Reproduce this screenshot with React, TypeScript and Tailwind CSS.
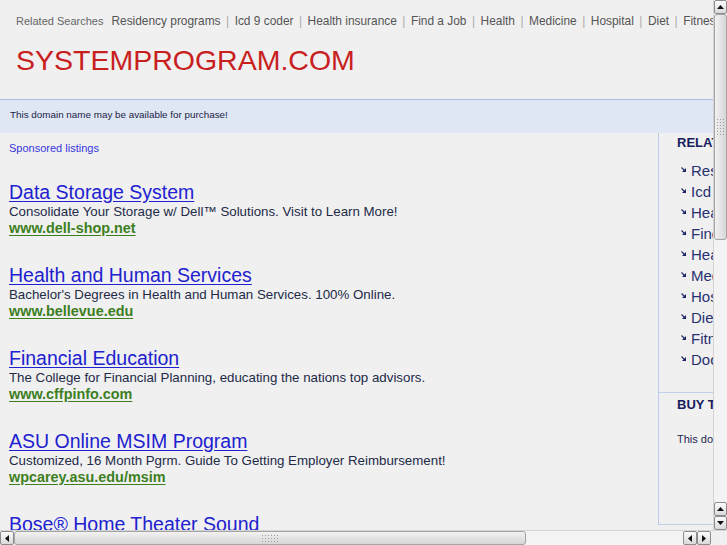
import React from "react";

const topLinks = [
  "Residency programs",
  "Icd 9 coder",
  "Health insurance",
  "Find a Job",
  "Health",
  "Medicine",
  "Hospital",
  "Diet",
  "Fitness",
  "Doctor",
];

const listings = [
  {
    t: "Data Storage System",
    d: "Consolidate Your Storage w/ Dell™ Solutions. Visit to Learn More!",
    u: "www.dell-shop.net",
  },
  {
    t: "Health and Human Services",
    d: "Bachelor's Degrees in Health and Human Services. 100% Online.",
    u: "www.bellevue.edu",
  },
  {
    t: "Financial Education",
    d: "The College for Financial Planning, educating the nations top advisors.",
    u: "www.cffpinfo.com",
  },
  {
    t: "ASU Online MSIM Program",
    d: "Customized, 16 Month Pgrm. Guide To Getting Employer Reimbursement!",
    u: "wpcarey.asu.edu/msim",
  },
  {
    t: "Bose® Home Theater Sound",
    d: "Experience Bose® home theater systems. Free shipping from Bose.",
    u: "www.bose.com",
  },
];

function Arrow({ dir }: { dir: "up" | "down" | "left" | "right" }) {
  const pts =
    dir === "up"
      ? "0,4 3.5,0 7,4"
      : dir === "down"
      ? "0,0 7,0 3.5,4"
      : dir === "left"
      ? "4,0 4,7 0,3.5"
      : "0,0 4,3.5 0,7";
  const w = dir === "up" || dir === "down" ? 7 : 4;
  const h = dir === "up" || dir === "down" ? 4 : 7;
  return (
    <svg width={w} height={h} viewBox={`0 0 ${w} ${h}`}>
      <polygon points={pts} fill="#111" />
    </svg>
  );
}

function SBtn({ dir, cls }: { dir: "up" | "down" | "left" | "right"; cls: string }) {
  return (
    <div
      className={`${cls} flex items-center justify-center rounded-[2px] border border-[#8c8c8c] bg-linear-to-b from-[#fcfcfc] to-[#d9d9d9]`}
    >
      <Arrow dir={dir} />
    </div>
  );
}

function Grip({ cols, rows }: { cols: number; rows: number }) {
  const dots: React.ReactElement[] = [];
  for (let r = 0; r < rows; r++)
    for (let c = 0; c < cols; c++)
      dots.push(<rect key={`${r}-${c}`} x={c * 3} y={r * 3} width={1} height={1} fill="#9a9a9a" />);
  return (
    <svg width={cols * 3 - 2} height={rows * 3 - 2}>
      {dots}
    </svg>
  );
}

function RelArrow() {
  return (
    <svg width="5" height="5" viewBox="0 0 5 5" className="mb-[4px]">
      <path d="M0.5 0.5 L4 4" stroke="#1c2466" strokeWidth="1.1" />
      <polygon points="5,1 5,5 1,5" fill="#1c2466" />
    </svg>
  );
}

export default function App() {
  return (
    <div className="w-[727px] h-[545px] flex flex-col bg-[#f0f0f0] overflow-hidden font-['Liberation_Sans',Arial,sans-serif]">
      <div className="flex h-[530px]">
        <div className="w-[713px] h-[530px] overflow-hidden">
          <div className="w-[960px]">
            {/* Header */}
            <div className="h-[100px] border-b border-[#a9bde0] pl-[16px] pt-[13px]">
              <div className="flex items-baseline h-[16px] leading-[16px] whitespace-nowrap">
                <span className="text-[11px] text-[#666] mr-[8px]">Related Searches</span>
                {topLinks.map((l, i) => (
                  <span key={l} className="flex items-baseline">
                    {i > 0 && <span className="text-[12px] text-[#aaa] mx-[5.5px]">|</span>}
                    <span className="text-[11.9px] text-[#555]">{l}</span>
                  </span>
                ))}
              </div>
              <div className="mt-[15px] text-[28.5px] leading-[32px] text-[#c8201e]">SYSTEMPROGRAM.COM</div>
            </div>
            {/* Band */}
            <div className="h-[33px] bg-[#dfe6f4] pl-[10px] pt-[8px] text-[9.85px] leading-[13px] text-[#1b2444]">
              This domain name may be available for purchase!
            </div>
            {/* Main */}
            <div className="flex items-start">
              <div className="w-[658px] pl-[9px] pt-[8px]">
                <div className="text-[11px] leading-[14px] text-[#3535de]">Sponsored listings</div>
                <div className="mt-[26px]">
                  {listings.map((x) => (
                    <div key={x.t} className="mb-[28px] whitespace-nowrap">
                      <div className="text-[19.5px] leading-[22px] text-[#2121cf] underline underline-offset-2">
                        {x.t}
                      </div>
                      <div className="text-[13.3px] leading-[17px] text-[#222a48]">{x.d}</div>
                      <div className="text-[14.4px] leading-[16px] font-bold text-[#3d7f1e] underline underline-offset-2">
                        {x.u}
                      </div>
                    </div>
                  ))}
                </div>
              </div>
              <div className="w-[300px] border-l border-[#b9cbe9] whitespace-nowrap">
                <div className="h-[257px] pl-[18px]">
                  <div className="mt-[2px] text-[13px] leading-[16px] font-bold text-[#161c5c]">RELATED SEARCHES</div>
                  <ul className="mt-[10px]">
                    {topLinks.map((l) => (
                      <li key={l} className="h-[21px] flex items-center pl-[4px] gap-[5px]">
                        <RelArrow />
                        <span className="text-[15px] text-[#283070]">{l}</span>
                      </li>
                    ))}
                  </ul>
                </div>
                <div className="h-[133px] border-t border-b border-[#c3d2ec] pl-[18px] pt-[4px]">
                  <div className="text-[13px] leading-[16px] font-bold text-[#161c5c]">BUY THIS DOMAIN</div>
                  <div className="mt-[19px] text-[11px] leading-[14px] text-[#1f2850]">
                    This domain name may be available for purchase!
                  </div>
                </div>
              </div>
            </div>
          </div>
        </div>
        {/* Vertical scrollbar */}
        <div className="w-[14px] h-[530px] flex flex-col bg-[#f3f3f3] border-l border-[#d4d4d4]">
          <SBtn dir="up" cls="h-[14px] w-[13px]" />
          <div className="h-[226px] w-[13px] flex items-center justify-center rounded-[3px] border border-[#a4a4a4] bg-linear-to-r from-[#f2f2f2] to-[#d6d6d6]">
            <Grip cols={3} rows={6} />
          </div>
          <div className="flex-1" />
          <SBtn dir="up" cls="h-[14px] w-[13px]" />
          <SBtn dir="down" cls="h-[14px] w-[13px]" />
        </div>
      </div>
      {/* Horizontal scrollbar */}
      <div className="h-[15px] flex bg-[#f3f3f3] border-t border-[#d4d4d4]">
        <SBtn dir="left" cls="w-[14px] h-[14px]" />
        <div className="w-[512px] h-[14px] flex items-center justify-center rounded-[3px] border border-[#a4a4a4] bg-linear-to-b from-[#f2f2f2] to-[#d6d6d6]">
          <Grip cols={6} rows={3} />
        </div>
        <div className="w-[157px]" />
        <SBtn dir="left" cls="w-[14px] h-[14px]" />
        <SBtn dir="right" cls="w-[14px] h-[14px]" />
        <div className="flex-1 bg-[#f0f0f0]" />
      </div>
    </div>
  );
}
